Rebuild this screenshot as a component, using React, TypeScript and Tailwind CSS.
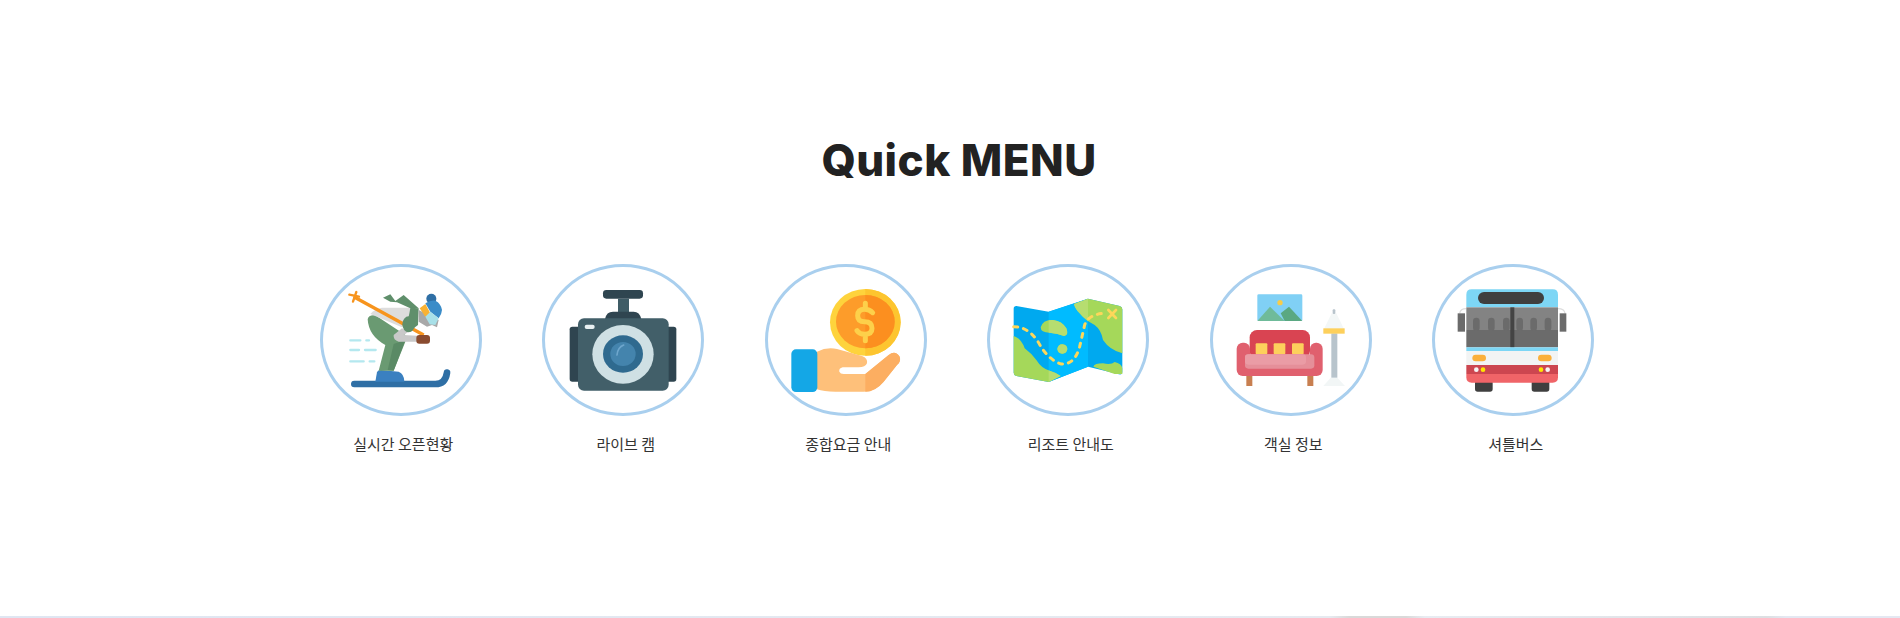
import React from 'react';

const landPaths = [
  'M298 162 L340 146 L435 168 Q443 170 443 178 V310 Q405 300 385 270 Q380 240 360 225 Q330 210 315 190 Q300 175 298 162Z',
  'M117 258 Q140 265 150 295 Q170 310 185 330 Q200 355 225 362 Q245 368 258 378 L222 396 L125 378 Q117 375 117 368Z',
  'M356 350 Q360 340 385 340 Q410 345 420 336 Q440 340 443 355 V372 L420 372Z',
  'M198 232 Q205 208 235 210 Q262 213 275 235 Q283 255 268 258 Q250 250 225 248 Q198 248 198 232Z',
  'M248 297 Q250 283 263 283 Q278 285 278 297 Q276 311 263 311 Q250 311 248 297Z',
];

function SkierIcon() {
  return (
    <>
      <path d="M132 402 H375 Q405 402 410 368" fill="none" stroke="#2f6fa5" strokeWidth="20" strokeLinecap="round" />
      <path d="M195 395 L200 366 Q203 360 212 360 L265 365 Q282 372 282 395Z" fill="#3a80c0" />
      <g stroke="#b4e8ef" strokeWidth="7" strokeLinecap="round">
        <path d="M120 271 H150 M168 271 H176 M120 300 H146 M164 300 H196 M120 334 H160 M178 334 H192" />
      </g>
      <path d="M172 208 Q175 193 195 196 L285 255 L285 275 L250 362 L205 362 L225 285 Q175 258 172 208Z" fill="#6a9a72" />
      <path d="M250 282 L285 270 L250 362 L232 360Z" fill="#5a8a65" />
      <path d="M180 192 Q195 175 215 173 L300 173 L296 200 L275 232Z" fill="#dddddd" />
      <path d="M218 143 L240 133 L255 153 L280 135 L325 175 L300 175 L260 157 L240 155Z" fill="#5f8f6b" />
      <path d="M300 173 L325 175 L323 225 L310 235 L295 200Z" fill="#5f8f6b" />
      <path d="M130 140 L340 255" stroke="#f7941d" strokeWidth="10" />
      <path d="M117 134 L146 140 M138 126 L128 155" stroke="#f7941d" strokeWidth="7" strokeLinecap="round" />
      <path d="M250 255 L275 235 L295 245 L280 255 L320 257 V275 L265 275 Q248 270 250 255Z" fill="#c9c9c9" />
      <ellipse cx="295" cy="223" rx="19" ry="24" fill="#5f8f6b" />
      <rect x="318" y="255" width="41" height="26" rx="9" fill="#8a4b2f" />
      <path d="M325 180 L385 210 L380 232 L365 225 L350 230 L325 215Z" fill="#a8a8a8" />
      <circle cx="363" cy="146" r="15" fill="#2f6fa5" />
      <path d="M345 160 Q360 150 375 152 Q392 160 395 180 Q394 194 385 205 L360 185Z" fill="#3a8cc8" />
      <path d="M328 175 L345 162 L360 190 L345 200Z" fill="#f9b233" />
      <path d="M345 200 L360 185 L385 205 L375 225 L358 223Z" fill="#a8e0e8" />
    </>
  );
}

function CameraIcon() {
  return (
    <>
      <rect x="220" y="120" width="120" height="26" rx="10" fill="#2f4550" />
      <rect x="265" y="146" width="33" height="42" fill="#3f5c66" />
      <path d="M226 207 Q230 185 250 185 H312 Q330 185 335 207Z" fill="#2f4550" />
      <rect x="120" y="230" width="40" height="165" rx="8" fill="#2f4550" />
      <rect x="400" y="230" width="40" height="165" rx="8" fill="#2f4550" />
      <rect x="145" y="205" width="272" height="217" rx="18" fill="#425f69" />
      <rect x="165" y="224" width="30" height="13" rx="6" fill="#e8f0f2" />
      <ellipse cx="280" cy="313" rx="92" ry="88" fill="#cfe0e4" />
      <ellipse cx="280" cy="312" rx="60" ry="56" fill="#2f6a8f" />
      <ellipse cx="280" cy="312" rx="38" ry="36" fill="#4484ad" />
      <path d="M262 315 Q264 292 282 285" fill="none" stroke="#6ea6cc" strokeWidth="5" strokeLinecap="round" />
    </>
  );
}

function CoinHandIcon() {
  return (
    <>
      <ellipse cx="330" cy="217" rx="106" ry="100" fill="#fed33c" />
      <path d="M330 117 A106 100 0 0 1 330 317Z" fill="#fdc52f" />
      <ellipse cx="330" cy="215" rx="88" ry="80" fill="#fd9c2a" />
      <path d="M330 135 A88 80 0 0 1 330 295Z" fill="#fc8f1f" />
      <path
        d="M330 160 V178 M352 188 Q342 178 328 178 Q307 178 307 197 Q307 215 328 215 Q350 215 350 235 Q350 253 328 253 Q312 253 305 242 M330 253 V272"
        fill="none"
        stroke="#fdd04a"
        strokeWidth="15"
        strokeLinecap="round"
      />
      <path
        d="M185 305 Q215 290 245 297 L320 318 Q338 325 335 340 Q330 352 310 352 H262 Q250 355 252 365 Q255 372 265 372 H330 L400 315 Q420 300 433 320 Q438 335 425 345 L385 395 Q360 425 325 425 H240 Q205 425 185 418Z"
        fill="#fec07a"
      />
      <path d="M330 372 L400 315 Q420 300 433 320 Q438 335 425 345 L385 395 Q360 425 330 425Z" fill="#fcae61" />
      <rect x="108" y="298" width="78" height="128" rx="14" fill="#14a7e6" />
    </>
  );
}

function MapIcon() {
  return (
    <>
      <defs>
        <clipPath id="map-middle">
          <rect x="222" y="130" width="118" height="280" />
        </clipPath>
      </defs>
      <path d="M125 168 L222 185 L340 146 L435 168 Q443 170 443 178 V365 Q443 375 433 373 L340 350 L222 396 L125 378 Q117 375 117 368 V176 Q117 168 125 168Z" fill="#00a9ef" />
      <path d="M222 185 L340 146 V350 L222 396Z" fill="#00bbff" />
      {landPaths.map((d) => (
        <path key={d} d={d} fill="#a5d85a" />
      ))}
      <g clipPath="url(#map-middle)">
        {landPaths.map((d) => (
          <path key={d} d={d} fill="#b6dd70" />
        ))}
      </g>
      <path
        d="M117 230 Q160 230 190 275 Q220 330 260 342 Q300 345 315 290 L330 225 Q340 195 385 190"
        fill="none"
        stroke="#fdd75a"
        strokeWidth="9"
        strokeLinecap="round"
        strokeDasharray="12 18"
      />
      <path d="M401 180 L424 204 M424 180 L401 204" stroke="#fdd75a" strokeWidth="8" strokeLinecap="round" />
    </>
  );
}

function RoomIcon() {
  return (
    <>
      <rect x="180" y="133" width="135" height="80" rx="4" fill="#80d0f5" />
      <circle cx="248" cy="158" r="8" fill="#f8cc4a" />
      <path d="M180 213 L218 170 L262 213Z" fill="#6fbb9a" />
      <path d="M250 190 L275 170 L315 213 H262Z" fill="#5aa882" />
      <rect x="157" y="240" width="181" height="85" rx="22" fill="#d94452" />
      <rect x="118" y="278" width="40" height="100" rx="18" fill="#e0606e" />
      <rect x="338" y="278" width="38" height="100" rx="18" fill="#e0606e" />
      <rect x="140" y="320" width="215" height="58" fill="#e0606e" />
      <rect x="175" y="280" width="35" height="33" rx="3" fill="#fdd05c" />
      <rect x="229" y="280" width="35" height="33" rx="3" fill="#fdd05c" />
      <rect x="284" y="280" width="35" height="33" rx="3" fill="#fdd05c" />
      <rect x="143" y="313" width="208" height="43" rx="10" fill="#e58f99" />
      <rect x="143" y="313" width="183" height="31" rx="10" fill="#ea9ca5" />
      <rect x="147" y="378" width="18" height="30" fill="#c87f50" />
      <rect x="330" y="378" width="18" height="30" fill="#c87f50" />
      <path d="M403 190 H417 L440 237 H380Z" fill="#f3f7f7" />
      <rect x="406" y="178" width="8" height="14" rx="3" fill="#b8c4cc" />
      <path d="M378 408 L400 383 H420 L443 408Z" fill="#f2f6f6" />
      <rect x="402" y="250" width="18" height="133" fill="#b8c4cc" />
      <rect x="378" y="235" width="64" height="16" fill="#fdd05c" />
    </>
  );
}

function BusIcon() {
  const arches = [160, 205, 250, 290, 332, 375];
  return (
    <>
      <path d="M120 190 Q122 176 140 176 M436 190 Q434 176 415 176" fill="none" stroke="#dddddd" strokeWidth="4" />
      <rect x="114" y="190" width="22" height="55" fill="#6b6b6b" />
      <rect x="420" y="190" width="20" height="55" fill="#6b6b6b" />
      <rect x="166" y="390" width="53" height="35" rx="8" fill="#3f3f3f" />
      <rect x="336" y="390" width="53" height="35" rx="8" fill="#3f3f3f" />
      <path d="M156 118 H399 Q415 118 415 134 V172 H140 V134 Q140 118 156 118Z" fill="#7dd6f5" />
      <rect x="175" y="126" width="198" height="36" rx="18" fill="#3f3f3f" />
      <rect x="140" y="172" width="275" height="68" fill="#838383" />
      <rect x="140" y="240" width="275" height="52" fill="#6b6b6b" />
      {arches.map((x) => (
        <rect key={x} x={x} y="203" width="20" height="40" rx="10" fill="#6b6b6b" />
      ))}
      <rect x="272" y="172" width="12" height="120" fill="#444444" />
      <rect x="140" y="292" width="275" height="11" fill="#7dd6f5" />
      <rect x="140" y="303" width="275" height="42" fill="#f2f4f4" />
      <rect x="158" y="314" width="41" height="20" rx="10" fill="#fbb03b" />
      <rect x="355" y="314" width="41" height="20" rx="10" fill="#fbb03b" />
      <path d="M140 372 H415 V382 Q415 398 399 398 H156 Q140 398 140 382Z" fill="#f06468" />
      <rect x="140" y="345" width="275" height="27" fill="#cc4650" />
      <circle cx="170" cy="359" r="7" fill="#f5f5f5" />
      <circle cx="190" cy="359" r="7" fill="#ffe600" />
      <circle cx="364" cy="359" r="7" fill="#ffe600" />
      <circle cx="384" cy="359" r="7" fill="#f5f5f5" />
    </>
  );
}

const menus = [
  { label: '실시간 오픈현황', viewBox: '38 51 468 438', Icon: SkierIcon },
  { label: '라이브 캠', viewBox: '46 51 468 438', Icon: CameraIcon },
  { label: '종합요금 안내', viewBox: '38 51 468 438', Icon: CoinHandIcon },
  { label: '리조트 안내도', viewBox: '46 51 468 438', Icon: MapIcon },
  { label: '객실 정보', viewBox: '47 51 468 438', Icon: RoomIcon },
  { label: '셔틀버스', viewBox: '46 51 468 438', Icon: BusIcon },
];

export default function App() {
  return (
    <div className="min-h-[618px] bg-white flex flex-col font-['Noto_Sans_CJK_KR','Noto_Sans',sans-serif]">
      <section className="h-[616px] flex flex-col items-center pt-[132px] pl-[14px]">
        <h2 className="h-[56px] pl-[4px] font-['Inter',sans-serif] text-[44px] font-extrabold leading-[56px] tracking-[0.45px] text-[#222222]">
          Quick MENU
        </h2>

        {/* Quick menu */}
        <div className="grid grid-cols-6 w-[1335px] mt-[76px]">
          {menus.map(({ label, viewBox, Icon }) => (
            <a key={label} href="#" className="flex flex-col items-center">
              <span className="block w-[162px] h-[152px] rounded-[50%] border-[3px] border-[#a9cfee] bg-white">
                <svg viewBox={viewBox} className="block w-full h-full" preserveAspectRatio="none">
                  <Icon />
                </svg>
              </span>
              <span className="mt-[18px] pl-[5px] text-[15px] leading-5 text-[#333333]">{label}</span>
            </a>
          ))}
        </div>
      </section>
      <div className="h-[2px] bg-[linear-gradient(90deg,#dfe6f2_0%,#e6eaf0_70%,#d9d9d9_71%,#d9d9d9_74%,#e8ecf2_75%,#e2e5ea_85%,#dcdfe2_93%,#e4e8f2_94%,#e4e8f2_100%)]" />
    </div>
  );
}
